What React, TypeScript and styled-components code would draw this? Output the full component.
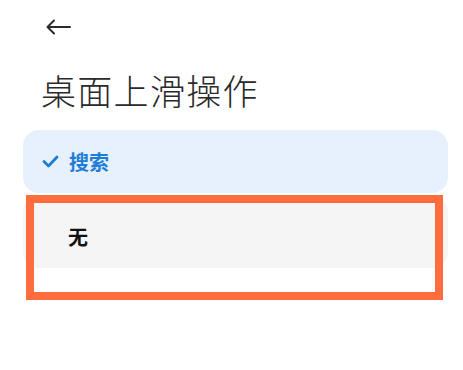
import React from "react";
import styled, { createGlobalStyle } from "styled-components";

const GlobalStyle = createGlobalStyle`
  html, body {
    margin: 0;
    padding: 0;
    background: #ffffff;
  }
  body {
    font-family: "Noto Sans CJK SC", "Noto Sans", sans-serif;
  }
`;

const Page = styled.div`
  width: 463px;
  height: 370px;
  background: #ffffff;
  display: flex;
  flex-direction: column;
`;

const TopBar = styled.div`
  height: 54px;
  display: flex;
  align-items: center;
  padding-left: 45px;
`;

const BackButton = styled.button`
  appearance: none;
  border: none;
  background: transparent;
  padding: 0;
  width: 28px;
  height: 20px;
  display: flex;
  align-items: center;
  color: #2b2b2b;
  cursor: pointer;
`;

const Title = styled.h1`
  margin: 12px 0 0 41px;
  font-size: 35px;
  font-weight: 300;
  line-height: 48px;
  color: #2a2a2a;
  letter-spacing: 1.3px;
`;

const List = styled.div`
  position: relative;
  margin: 16px 0 0 23px;
  width: 425px;
  display: flex;
  flex-direction: column;
  gap: 3px;
`;

const Option = styled.div<{ $selected?: boolean; $height: number; $shift?: number }>`
  height: ${(p) => p.$height}px;
  box-sizing: border-box;
  border-radius: 16px;
  display: flex;
  align-items: center;
  padding-left: ${(p) => (p.$selected ? 19 : 45)}px;
  padding-top: ${(p) => p.$shift ?? 0}px;
  gap: 10px;
  background: ${(p) => (p.$selected ? "#e6f1fd" : "#f5f5f5")};
  color: ${(p) => (p.$selected ? "#1f7dd6" : "#111111")};
  font-size: 20px;
  font-weight: 700;
`;

const Highlight = styled.div`
  position: absolute;
  left: 3px;
  top: 65px;
  width: 417px;
  height: 105px;
  box-sizing: border-box;
  border: 8px solid #ff6d3f;
  pointer-events: none;
`;

const BackIcon = () => (
  <svg width="26" height="16" viewBox="0 0 26 16" fill="none">
    <path
      d="M25 8H2.5M9 1.5L2.5 8L9 14.5"
      stroke="currentColor"
      strokeWidth="2"
      strokeLinecap="round"
      strokeLinejoin="round"
    />
  </svg>
);

const CheckIcon = () => (
  <svg width="17" height="13" viewBox="0 0 17 13" fill="none">
    <path
      d="M2 6.5L6.5 11L15 2"
      stroke="currentColor"
      strokeWidth="2.8"
      strokeLinecap="round"
      strokeLinejoin="round"
    />
  </svg>
);

export default function App() {
  return (
    <>
      <GlobalStyle />
      <Page>
        <TopBar>
          <BackButton aria-label="返回">
            <BackIcon />
          </BackButton>
        </TopBar>
        <Title>桌面上滑操作</Title>
        <List>
          <Option $selected $height={63}>
            <CheckIcon />
            <span>搜索</span>
          </Option>
          <Option $height={72} $shift={8}>
            <span>无</span>
          </Option>
          <Highlight />
        </List>
      </Page>
    </>
  );
}
